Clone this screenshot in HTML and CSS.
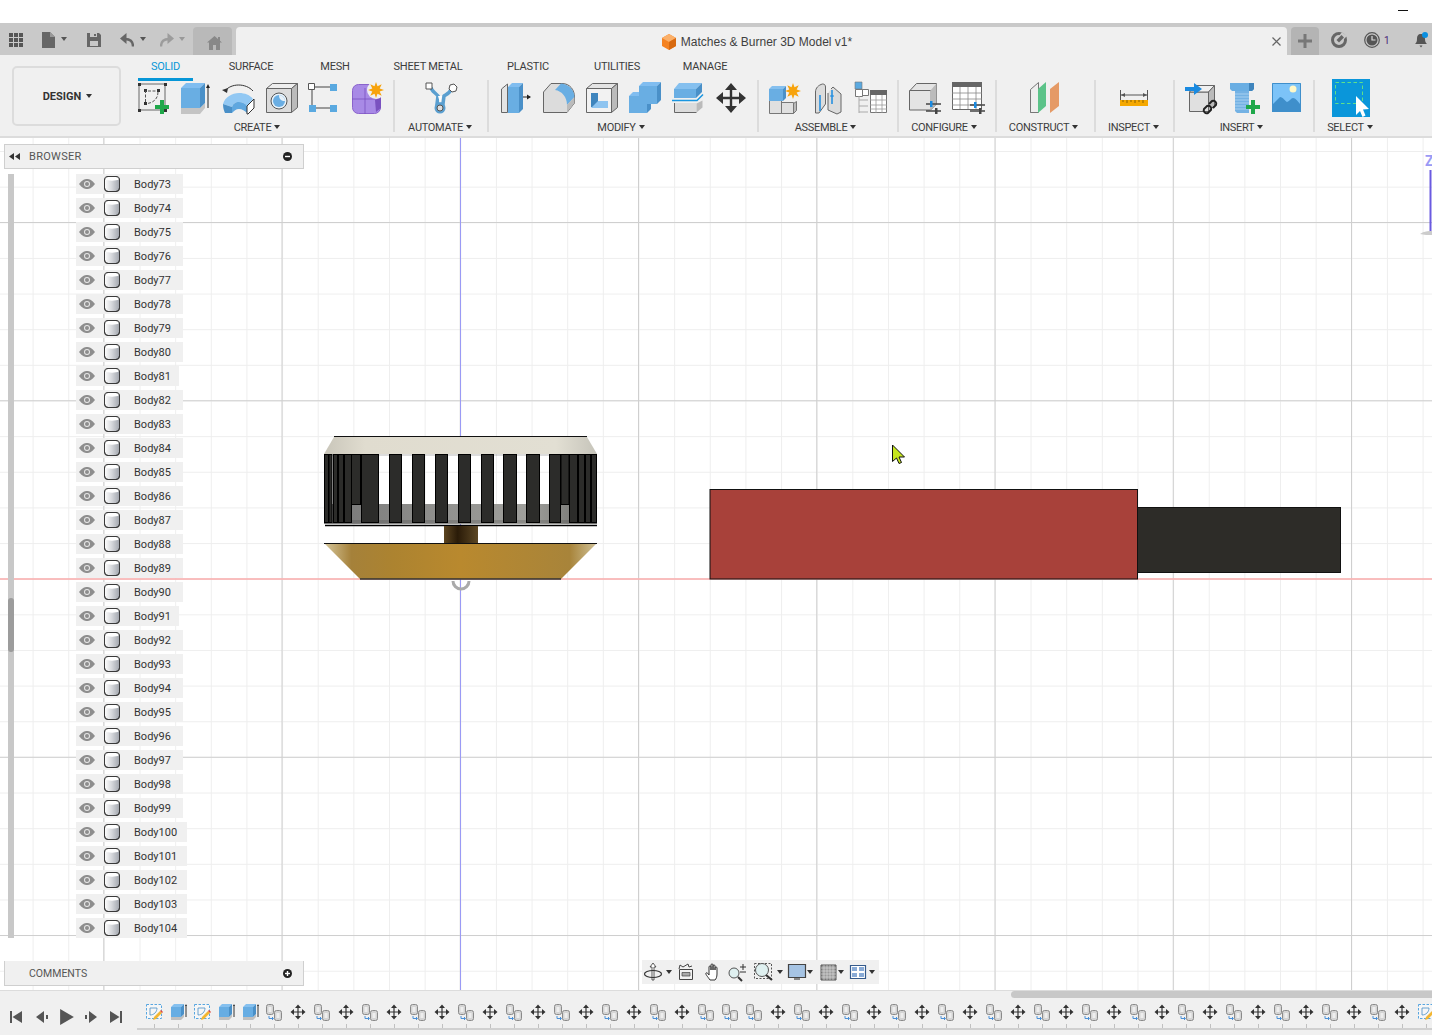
FILE: index.html
```html
<!DOCTYPE html>
<html lang="en">
<head>
<meta charset="utf-8">
<title>Matches &amp; Burner 3D Model v1</title>
<link rel="stylesheet" href="styles.css">
</head>
<body>
<svg class="defs" aria-hidden="true">
  <defs>
    <path id="star" d="M8 0 3.700 1.500 5.700 5.700 1.500 3.700 0 8-1.500 3.700-5.700 5.700-3.700 1.500-8 0-3.700-1.500-5.700-5.700-1.500-3.700 0-8 1.500-3.700 5.700-5.700 3.700-1.500Z" fill="#f7a30c"/>
    <linearGradient id="cyl" x1="0" x2="1" y1="0" y2="0"><stop offset="0" stop-color="#fff"/><stop offset=".5" stop-color="#d4d6da"/><stop offset="1" stop-color="#a0a4ac"/></linearGradient>
    <linearGradient id="topcone" x1="0" x2="1" y1="0" y2="0"><stop offset="0" stop-color="#c9c6ba"/><stop offset=".15" stop-color="#e0dccf"/><stop offset=".85" stop-color="#e2dfd3"/><stop offset="1" stop-color="#c6c4ba"/></linearGradient>
    <linearGradient id="band" x1="0" x2="1" y1="0" y2="0"><stop offset="0" stop-color="#777"/><stop offset=".35" stop-color="#8c8c8a"/><stop offset=".75" stop-color="#a0a09c"/><stop offset="1" stop-color="#6a6a68"/></linearGradient>
    <linearGradient id="stem" x1="0" x2="1" y1="0" y2="0"><stop offset="0" stop-color="#5c4520"/><stop offset=".4" stop-color="#2a1b08"/><stop offset="1" stop-color="#5c4724"/></linearGradient>
    <linearGradient id="gold" x1="0" x2="1" y1="0" y2="0"><stop offset="0" stop-color="#d6c79c"/><stop offset=".1" stop-color="#a5813a"/><stop offset=".25" stop-color="#ac8330"/><stop offset=".5" stop-color="#b9892e"/><stop offset=".9" stop-color="#a8843a"/><stop offset="1" stop-color="#d0c299"/></linearGradient>
    <symbol id="move" viewBox="0 0 36 36"><path d="M18 3 24 10H19.200V16.800H26V12L33 18 26 24V19.200H19.200V26H24L18 33 12 26H16.800V19.200H10V24L3 18 10 12V16.800H16.800V10H12Z" fill="#333"/></symbol>
    <symbol id="tl-sketch" viewBox="0 0 18 18"><path d="M1.500 1.500h15v14h-15z" fill="#f6f6f6" stroke="#58a6e0" stroke-dasharray="2.500 1.500"/><path d="M5 12V5h7M12 5c0 4-3 7-7 7" fill="none" stroke="#4a90c8" stroke-width=".8"/><path d="M9 14l6-6 2 2-6 6-3 1z" fill="#f2b632"/><path d="M15 8l2 2 1-1-2-2z" fill="#e0483c"/></symbol>
    <symbol id="tl-extrude" viewBox="0 0 18 18"><path d="M2 14h10l3-3v3l-3 3H2z" fill="#bfbfbf"/><path d="M2 4h10v10H2z" fill="#67ade3"/><path d="M2 4l3-3h10l-3 3z" fill="#85c0ef"/><path d="M12 4l3-3v10l-3 3z" fill="#4a90c8"/><path d="M17 14V2" stroke="#333"/><path d="M16 3l1-2 1 2z" fill="#333"/></symbol>
    <symbol id="tl-combine" viewBox="0 0 18 18"><rect x="1.500" y="1.500" width="7" height="10" rx="2" fill="#d4d4d4" stroke="#8a8a8a"/><rect x="3.500" y="4" width="3" height="5" fill="#eee"/><rect x="9.500" y="7.500" width="7" height="10" rx="2" fill="#d4d4d4" stroke="#8a8a8a"/><rect x="11.500" y="10" width="3" height="5" fill="#eee"/><path d="M4 13v2.500h4M7 14l1.500 1.500L7 17" fill="none" stroke="#4a90d8"/></symbol>
    <symbol id="eye" viewBox="0 0 16 10"><path d="M0 5C3 1 5.500 0 8 0s5 1 8 5c-3 4-5.500 5-8 5S3 9 0 5Z" fill="#8e8e8e"/><circle cx="8" cy="5" r="3" fill="#e8e8e8"/><circle cx="8" cy="5" r="2" fill="#8e8e8e"/></symbol>
    <symbol id="body" viewBox="0 0 16 16"><rect x=".5" y=".5" width="15" height="15" rx="3.500" fill="url(#cyl)" stroke="#3a3a3a"/><path d="M1 3.500c3 1.500 11 1.500 14 0V1H1z" fill="#fff"/><rect x=".5" y=".5" width="15" height="15" rx="3.500" fill="none" stroke="#3a3a3a"/></symbol>
  </defs>
</svg>
<div class="app">
  <header class="topstrip"><span class="minimize"></span></header>
  <nav class="titlebar">
    <svg class="tb-icon" width="14" height="14" viewBox="0 0 14 14"><path d="M0 0h4v4H0zM5 0h4v4H5zM10 0h4v4h-4zM0 5h4v4H0zM5 5h4v4H5zM10 5h4v4h-4zM0 10h4v4H0zM5 10h4v4H5zM10 10h4v4h-4z" fill="#555"/></svg>
    <svg class="tb-icon" width="13" height="16" viewBox="0 0 13 16"><path d="M0 0h8l5 5v11H0z" fill="#666"/><path d="M8 0v5h5z" fill="#999"/></svg>
    <span class="caret tb-caret"></span>
    <svg class="tb-icon" width="14" height="14" viewBox="0 0 14 14"><path d="M0 0h12l2 2v12H0z" fill="#666"/><path d="M3 0h7v4H3zM3 8h8v5H3z" fill="#c8c8c8"/><path d="M7 1h2v2H7z" fill="#666"/></svg>
    <svg class="tb-icon" width="14" height="14" viewBox="0 0 14 14"><path d="M13 13.500C13 8 10 6 5 6" fill="none" stroke="#666" stroke-width="2.400"/><path d="M6.500 0v11L0 5.500z" fill="#666"/></svg>
    <span class="caret tb-caret"></span>
    <svg class="tb-icon" width="14" height="14" viewBox="0 0 14 14"><path d="M1 13.500C1 8 4 6 9 6" fill="none" stroke="#9c9c9c" stroke-width="2.400"/><path d="M7.500 0v11L14 5.500z" fill="#9c9c9c"/></svg>
    <span class="caret tb-caret tb-caret-dim"></span>
    <div class="home-tab"><svg width="15" height="14" viewBox="0 0 15 14"><path d="M7.500 0 11 3V1h2v3.700L15 6.500h-2V14H9V9H6v5H2V6.500H0z" fill="#888"/></svg></div>
    <div class="doc-tab">
      <svg width="16" height="16" viewBox="0 0 16 16"><path d="M8 0l7 4v8l-7 4-7-4V4z" fill="#f58220"/><path d="M8 8l7-4L8 0 1 4z" fill="#fbb06a"/><path d="M8 8v8l7-4V4z" fill="#d86a10"/></svg>
      <span class="doc-title">Matches &amp; Burner 3D Model v1*</span>
      <svg class="doc-close" width="9" height="9" viewBox="0 0 9 9"><path d="M.5.500l8 8M8.500.500l-8 8" stroke="#666" stroke-width="1.200"/></svg>
    </div>
    <div class="plus-tab"><svg width="14" height="14" viewBox="0 0 14 14"><path d="M5.500 0h3v5.500H14v3H8.500V14h-3V8.500H0v-3h5.500z" fill="#777"/></svg></div>
    <svg class="tb-icon" width="16" height="16" viewBox="0 0 16 16"><circle cx="8" cy="8" r="6.500" fill="none" stroke="#666" stroke-width="3"/><path d="M11 0l5 4-4 4-4-4z" fill="#c9c9c9"/><path d="M5.500 8l5-5 2.500 2.500-5 5z" fill="#666"/></svg>
    <div class="tb-clock"><svg width="16" height="16" viewBox="0 0 16 16"><circle cx="8" cy="8" r="7.300" fill="none" stroke="#555" stroke-width="1.200"/><circle cx="8" cy="8" r="5.500" fill="#555"/><path d="M8 4v4h3.500" fill="none" stroke="#ddd" stroke-width="1.200"/></svg><span>1</span></div>
    <svg class="tb-icon" width="16" height="16" viewBox="0 0 16 16"><path d="M7 2c3 0 4 2 4 5s1 4 2 5H1c1-1 2-2 2-5s1-5 4-5zM5.500 13.500h3L7 15.500z" fill="#555"/><circle cx="11" cy="3" r="3" fill="#0a8fe0"/></svg>
  </nav>
  <section class="toolbar">
    <div class="design-col"><button class="design-btn"><span class="caret-label">DESIGN</span></button></div>
    <div class="tool-col">
      <div class="tabs">
        <span class="tab tab-active">SOLID</span><span class="tab">SURFACE</span><span class="tab">MESH</span><span class="tab">SHEET METAL</span><span class="tab">PLASTIC</span><span class="tab">UTILITIES</span><span class="tab">MANAGE</span>
      </div>
      <div class="ribbon">
        <div class="group g-create">
          <div class="icons">
            <svg class="ic" viewBox="0 0 36 36"><path d="M4 4h26v26H4z" fill="none" stroke="#444" stroke-width=".8"/><path d="M3 3h3v3H3zM29 3h3v3h-3zM3 29h3v3H3zM29 29h3v3h-3zM9 9h3v3H9zM22 9h3v3h-3zM9 22h3v3H9z" fill="#333"/><path d="M10.500 22V11h11M23 12c0 7-5 11-11 11.500" fill="none" stroke="#555" stroke-dasharray="3 1.500"/><path d="M25 20h4v5h5v4h-5v5h-4v-5h-5v-4h5z" fill="#1fa84a"/></svg>
            <svg class="ic" viewBox="0 0 36 36"><path d="M4 28h19l5-5v5l-5 6H4z" fill="#c4c4c4"/><path d="M4 8h19v20H4z" fill="#69aee3"/><path d="M4 8l5-5h19l-5 5z" fill="#80bdf0"/><path d="M23 8l5-5v20l-5 5z" fill="#4a90c8"/><path d="M31 28V7" stroke="#222"/><path d="M29 8l2-4 2 4z" fill="#222"/></svg>
            <svg class="ic" viewBox="0 0 36 36"><path d="M4 11C10 3 25 3 32 11" fill="none" stroke="#333"/><path d="M1 10l6-2-1 5z" fill="#333"/><path d="M2 24C4 17 11 13 18 13 24 13 29 15 32 19L26 26C24 23 21 22 18 22 14 22 12 24 11 27Z" fill="#92c8f3"/><path d="M2 24C2 28 3 31 4 33L11 33V27Z" fill="#4a90c8"/><path d="M11 27C12 24 14 22 18 22 21 22 24 23 26 26V33C24 31 21 29 18 29 15 29 13 31 11 33Z" fill="#5fa7df"/><path d="M26 26 33 19V28L27 34H26Z" fill="#fff" stroke="#333"/></svg>
            <svg class="ic" viewBox="0 0 36 36"><path d="M2.500 8.500h25v24h-25z" fill="#dcdcdc" stroke="#666"/><path d="M2.500 8.500l6-5h25l-6 5z" fill="#eee" stroke="#666"/><path d="M27.500 8.500l6-5v24l-6 5z" fill="#bbb" stroke="#666"/><circle cx="15" cy="21" r="8" fill="#e8f2fa" stroke="#555"/><circle cx="15" cy="21" r="6" fill="#6aaee3"/><path d="M15 15c3 0 6 3 6 6-4 0-6-2-6-6z" fill="#e8f2fa"/></svg>
            <svg class="ic" viewBox="0 0 36 36"><path d="M10 7h15M7 10v15M10 28h15" stroke="#444"/><path d="M3.500 3.500h6v6h-6z" fill="#fff" stroke="#555"/><path d="M25 4h7v7h-7zM4 25h7v7H4zM25 25h7v7h-7z" fill="#5aa9e0"/></svg>
            <svg class="ic" viewBox="0 0 36 36"><rect x="3.500" y="4.500" width="28" height="29" rx="6" fill="#a88ae6" stroke="#8a63cc"/><path d="M3 19h24M16 8v26" stroke="#7a52c0" stroke-width=".8"/><path d="M26 20l6-3v11l-5 4z" fill="#7a52c0"/><circle cx="27" cy="10" r="9" fill="#f0f0f0"/><use href="#star" x="27" y="10"/></svg>
          </div>
          <span class="label caret-label">CREATE</span>
        </div>
        <div class="group g-automate">
          <div class="icons">
            <svg class="ic" viewBox="0 0 36 36"><path d="M8 7c0 4 5 6 7 9l-1 8h6l1-8c3-2 6-3 8-8" fill="none" stroke="#5a9fd0" stroke-width="3.500"/><path d="M15 16l2 7 2-7z" fill="#fff"/><path d="M3 3h6v6H3z" fill="#fff" stroke="#555"/><path d="M27 5l4-1 3 3-1 4-4 1-3-3z" fill="#fff" stroke="#555"/><circle cx="17" cy="28" r="5.500" fill="#5a9fd0"/><circle cx="17" cy="28" r="3" fill="#ddd" stroke="#555"/></svg>
          </div>
          <span class="label caret-label">AUTOMATE</span>
        </div>
        <div class="group g-modify">
          <div class="icons">
            <svg class="ic" viewBox="0 0 36 36"><path d="M4.500 32.500V9l6-5v28.500z" fill="#e4e4e4" stroke="#666"/><path d="M11 7h11v26H11z" fill="#69aee3"/><path d="M11 7l4-4h11l-4 4z" fill="#80bdf0"/><path d="M22 7l4-4v26l-4 4z" fill="#4a90c8"/><path d="M26 17h7" stroke="#222"/><path d="M30 14.500l4 2.500-4 2.500z" fill="#222"/></svg>
            <svg class="ic" viewBox="0 0 36 36"><path d="M3.500 32.500V12L11 3.500h11C30 3.500 34.500 10 34.500 17v6L27 32.500Z" fill="#dcdcdc" stroke="#666"/><path d="M15 10l6-6.500c8 .5 13.500 7 13.500 13.500L27 25c0-8-5-14-12-15z" fill="#69aee3"/><path d="M27 25l7.500-8v6L27 32.500z" fill="#bbb"/></svg>
            <svg class="ic" viewBox="0 0 36 36"><path d="M2.500 8.500h25v24h-25z" fill="#f2f2f2" stroke="#666"/><path d="M2.500 8.500l6-5h25l-6 5z" fill="#e4e4e4" stroke="#666"/><path d="M27.500 8.500l6-5v24l-6 5z" fill="#bbb" stroke="#666"/><path d="M7 13h7v14H7z" fill="#3f85bd"/><path d="M7 28l7-7h10v7z" fill="#8ec4f0"/></svg>
            <svg class="ic" viewBox="0 0 36 36"><path d="M2 16H12V6H30V24H20V33H2Z" fill="#69aee3"/><path d="M12 6l4-4h18l-4 4zM2 16l4-4h6v4z" fill="#80bdf0"/><path d="M30 6l4-4v18l-4 4zM20 24h4v5l-4 4z" fill="#4a90c8"/></svg>
            <svg class="ic" viewBox="0 0 36 36"><path d="M4 9h22v9H4z" fill="#69aee3"/><path d="M4 9l5-6h23l-6 6z" fill="#85c0ef"/><path d="M26 9l6-6v9l-6 6z" fill="#4a90c8"/><path d="M2 20.500h25l6-6" fill="none" stroke="#1a96e0" stroke-width="1.500"/><path d="M4.500 23v9.500h22V23z" fill="#dcdcdc"/><path d="M4.500 23v9.500h22" fill="none" stroke="#666"/><path d="M26.500 32.500l6-5v-7l-6 3z" fill="#bbb"/></svg>
            <svg class="ic" viewBox="0 0 36 36"><use href="#move" width="36" height="36"/></svg>
          </div>
          <span class="label caret-label">MODIFY</span>
        </div>
        <div class="group g-assemble">
          <div class="icons">
            <svg class="ic" viewBox="0 0 36 36"><path d="M3.500 20.500h12v13h-12zM15.500 22.500h12v11h-12z" fill="#e0e0e0" stroke="#777"/><path d="M27.500 33.500l3-3v-9l-3 2z" fill="#bbb" stroke="#777"/><path d="M3 9h14v12H3z" fill="#69aee3"/><path d="M3 9l3-3h14l-3 3z" fill="#85c0ef"/><path d="M17 9l3-3v12l-3 3z" fill="#4a90c8"/><use href="#star" x="27" y="11"/></svg>
            <svg class="ic" viewBox="0 0 36 36"><path d="M5.500 33V12c0-4 3-7 7-8 2 0 3 1 3 3v17L9 33z" fill="#dcdcdc" stroke="#666"/><path d="M18 13v17l9 4 4-2V14l-8-7-2 2" fill="#dcdcdc" stroke="#666"/><path d="M10 15v16M22 10v14" stroke="#1a8ae0" stroke-width="1.500"/><path d="M20 16h4" stroke="#1a8ae0"/></svg>
            <svg class="ic" viewBox="0 0 36 36"><path d="M2 2h7v7H2z" fill="#5aa9e0" stroke="#777" stroke-width=".6"/><path d="M9.500 9.500h6v6h-6zM2.500 9.500h7v7h-7z" fill="#fff" stroke="#777"/><path d="M6 16v17M6 20h9M6 26h9M6 32h9" stroke="#aaa"/><path d="M17.500 14.500h16v18h-16z" fill="#fff" stroke="#777"/><path d="M17 10h17v5H17z" fill="#666"/><path d="M17 20h17M17 25h17M17 29h17M23 15v18M29 15v18" stroke="#999" stroke-width=".8"/></svg>
          </div>
          <span class="label caret-label">ASSEMBLE</span>
        </div>
        <div class="group g-configure">
          <div class="icons">
            <svg class="ic" viewBox="0 0 36 36"><path d="M2.500 30V11l7-7.500h20V24l-6 6z" fill="#e4e4e4" stroke="#666"/><path d="M23 11l6.500-7.500V24L23 30z" fill="#bbb"/><path d="M23.500 10.500H2.500" stroke="#666" fill="none"/><path d="M19 24h15M19 31h15" stroke="#444" stroke-width="1.500"/><path d="M23 21h2.500v6H23z" fill="#1a8ae0"/><path d="M28 28h2.500v6H28z" fill="#444"/></svg>
            <svg class="ic" viewBox="0 0 36 36"><path d="M2.500 2.500h29v27h-29z" fill="#fff" stroke="#666"/><path d="M2 2h30v5H2z" fill="#666"/><path d="M2 13h30M2 19h30M2 25h30M10 7v22M18 7v22M26 7v22" stroke="#888" stroke-width=".8"/><path d="M20 25h15M20 31h15" stroke="#444" stroke-width="1.500"/><path d="M24 22h2.500v6H24z" fill="#1a8ae0"/><path d="M29 28h2.500v6H29z" fill="#444"/></svg>
          </div>
          <span class="label caret-label">CONFIGURE</span>
        </div>
        <div class="group g-construct">
          <div class="icons">
            <svg class="ic" viewBox="0 0 36 36"><path d="M3.500 32.500V9.500l8-7v30z" fill="#eee" stroke="#777"/><path d="M3.500 32.500H11" stroke="#777"/><path d="M11 9l8-7v24l-8 7z" fill="#5cc389"/><path d="M23 9l9-7v24l-9 7z" fill="#e59a66"/></svg>
          </div>
          <span class="label caret-label">CONSTRUCT</span>
        </div>
        <div class="group g-inspect">
          <div class="icons">
            <svg class="ic" viewBox="0 0 36 36"><path d="M4.500 10v11M31.500 10v11M5 15h26" stroke="#555"/><path d="M5 15l4-2v4zM31 15l-4-2v4z" fill="#555"/><path d="M4 20h28v6H4z" fill="#f5a800"/><path d="M7 20v2M11 20v3M15 20v2M19 20v3M23 20v2M27 20v3" stroke="#8a6000"/></svg>
          </div>
          <span class="label caret-label">INSPECT</span>
        </div>
        <div class="group g-insert">
          <div class="icons">
            <svg class="ic" viewBox="0 0 36 36"><path d="M5.500 31.500V12h19v19.500z" fill="#e0e0e0" stroke="#666"/><path d="M5.500 12l6-6.500h19L24.500 12z" fill="#f0f0f0" stroke="#666"/><path d="M24.500 12l6-6.500v20l-6 6z" fill="#bbb" stroke="#666"/><path d="M1 7h9V3l8 6-8 6v-4H1z" fill="#1a8ae0"/><path d="M20 29l3-3a3 3 0 014 4l-3 3a3 3 0 01-4-4zM25 24l3-3a3 3 0 014 4l-3 3" fill="none" stroke="#222" stroke-width="2"/></svg>
            <svg class="ic" viewBox="0 0 36 36"><path d="M3 3h24v6l-2 2H5L3 9z" fill="#6aaee3"/><path d="M22 3h5v6l-2 2h-3z" fill="#3f85bd"/><path d="M8 11h14v22H10l-2-2z" fill="#74b2e4"/><path d="M8 14h14M8 17h14M8 20h14M8 23h14M8 26h14M8 29h14" stroke="#a8d0f0"/><path d="M24 20h4v5h5v4h-5v5h-4v-5h-5v-4h5z" fill="#1fa84a"/></svg>
            <svg class="ic" viewBox="0 0 36 36"><path d="M3 3h29v29H3z" fill="#7cc3f8"/><path d="M3 25l8-8c3 0 5 4 7 5 3-1 4-4 6-4 3 0 6 5 8 7v7H3z" fill="#3f8fcb"/><circle cx="24" cy="9" r="3.500" fill="#fff8c8"/><path d="M3.500 3.500h28v28h-28z" fill="none" stroke="#3f8fcb"/></svg>
          </div>
          <span class="label caret-label">INSERT</span>
        </div>
        <div class="group g-select">
          <svg class="ic-select" viewBox="0 0 38 38"><path d="M0 0h38v38H0z" fill="#0a96da"/><path d="M3.500 3.500h27v21h-27z" fill="none" stroke="#5fe08a" stroke-dasharray="3.500 2.500"/><path d="M24 17l13 13-6 .5 2.500 6-3 1.500-2.500-6-4 4z" fill="#fff"/></svg>
          <span class="label caret-label">SELECT</span>
        </div>
      </div>
    </div>
  </section>
  <main class="viewport">
    <svg class="scene" width="1432" height="852" viewBox="0 138 1432 852">
      <path d="M0 579H1432" stroke="#ffb0b0" stroke-width="1.500"/>
      <path d="M460.500 138V990" stroke="#9a9af5"/>
      <path d="M453 581a8 8 0 0016 0" fill="none" stroke="#aaa" stroke-width="3"/>
      <path d="M334 437H587L597 454H324Z" fill="url(#topcone)"/>
      <path d="M334 436.500H587" stroke="#111"/>
      <path d="M324 504H597V524H324Z" fill="url(#band)"/>
      <path d="M324 454H597V456H324ZM324 520H597V523H324Z" fill="#111" opacity=".15"/>
      <g class="bars">
        <rect x="324.500" y="454.500" width="4" height="68"/><rect x="329" y="454.500" width="3" height="68"/><rect x="333.500" y="454.500" width="4" height="68"/><rect x="338.500" y="454.500" width="5" height="68"/><rect x="344.500" y="454.500" width="7" height="68"/><rect x="351.500" y="454.500" width="9" height="50"/>
        <rect x="361.500" y="454.500" width="17" height="68"/><rect x="389.500" y="454.500" width="12" height="68"/><rect x="412.500" y="454.500" width="12" height="68"/><rect x="435.500" y="454.500" width="12" height="68"/><rect x="458.500" y="454.500" width="12" height="68"/><rect x="481.500" y="454.500" width="12" height="68"/><rect x="503.500" y="454.500" width="13" height="68"/><rect x="526.500" y="454.500" width="13" height="68"/><rect x="549.500" y="454.500" width="11" height="68"/>
        <rect x="561" y="454.500" width="8" height="50"/><rect x="569.500" y="454.500" width="8" height="68"/><rect x="578.500" y="454.500" width="6" height="68"/><rect x="585.500" y="454.500" width="5" height="68"/><rect x="591.500" y="454.500" width="5" height="68"/>
      </g>
      <path d="M325 525.500H597" stroke="#000" stroke-width="1.500"/>
      <path d="M444 526H478V543H444Z" fill="url(#stem)"/>
      <path d="M324 543H597L561 579H360Z" fill="url(#gold)"/>
      <path d="M324 543.500H597" stroke="#111" stroke-width="1"/>
      <path d="M360 579H561" stroke="#333" stroke-width="1.500"/>
      <rect x="710" y="489.500" width="427.500" height="89.500" fill="#a8413a" stroke="#111"/>
      <rect x="1137.500" y="507.500" width="203" height="65" fill="#2d2c28" stroke="#111"/>
      <path d="M892.500 445V461.500L896.500 458 899 463.500 901.500 462.500 899 457H904.500Z" fill="#c6e61e" stroke="#111"/>
      <path d="M1430.500 170V232" stroke="#6a5ae0" stroke-width="2"/>
      <path d="M1420 234c4-3 8-3 12-3v4c-4 0-8 0-12-1z" fill="#ccc"/>
      <text x="1425" y="166" class="axis-z">Z</text>
    </svg>
    <aside class="browser">
      <div class="panel-head">
        <svg class="collapse" width="11" height="7" viewBox="0 0 11 7"><path d="M5 0v7L0 3.500zM11 0v7L6 3.500z" fill="#333"/></svg>
        <span class="panel-title panel-title-wide">BROWSER</span>
        <span class="panel-btn"><svg width="9" height="9" viewBox="0 0 9 9"><circle cx="4.500" cy="4.500" r="4.500" fill="#222"/><path d="M2 3.800h5v1.400H2z" fill="#fff"/></svg></span>
      </div>
      <div class="tree">
        <div class="scrollbar"><div class="scroll-thumb"></div></div>
        <ul class="rows">
          <li class="row"><svg class="eye"><use href="#eye"/></svg><svg class="cyl"><use href="#body"/></svg><span>Body73</span></li>
          <li class="row"><svg class="eye"><use href="#eye"/></svg><svg class="cyl"><use href="#body"/></svg><span>Body74</span></li>
          <li class="row"><svg class="eye"><use href="#eye"/></svg><svg class="cyl"><use href="#body"/></svg><span>Body75</span></li>
          <li class="row"><svg class="eye"><use href="#eye"/></svg><svg class="cyl"><use href="#body"/></svg><span>Body76</span></li>
          <li class="row"><svg class="eye"><use href="#eye"/></svg><svg class="cyl"><use href="#body"/></svg><span>Body77</span></li>
          <li class="row"><svg class="eye"><use href="#eye"/></svg><svg class="cyl"><use href="#body"/></svg><span>Body78</span></li>
          <li class="row"><svg class="eye"><use href="#eye"/></svg><svg class="cyl"><use href="#body"/></svg><span>Body79</span></li>
          <li class="row"><svg class="eye"><use href="#eye"/></svg><svg class="cyl"><use href="#body"/></svg><span>Body80</span></li>
          <li class="row row-narrow"><svg class="eye"><use href="#eye"/></svg><svg class="cyl"><use href="#body"/></svg><span>Body81</span></li>
          <li class="row"><svg class="eye"><use href="#eye"/></svg><svg class="cyl"><use href="#body"/></svg><span>Body82</span></li>
          <li class="row"><svg class="eye"><use href="#eye"/></svg><svg class="cyl"><use href="#body"/></svg><span>Body83</span></li>
          <li class="row"><svg class="eye"><use href="#eye"/></svg><svg class="cyl"><use href="#body"/></svg><span>Body84</span></li>
          <li class="row"><svg class="eye"><use href="#eye"/></svg><svg class="cyl"><use href="#body"/></svg><span>Body85</span></li>
          <li class="row"><svg class="eye"><use href="#eye"/></svg><svg class="cyl"><use href="#body"/></svg><span>Body86</span></li>
          <li class="row"><svg class="eye"><use href="#eye"/></svg><svg class="cyl"><use href="#body"/></svg><span>Body87</span></li>
          <li class="row"><svg class="eye"><use href="#eye"/></svg><svg class="cyl"><use href="#body"/></svg><span>Body88</span></li>
          <li class="row"><svg class="eye"><use href="#eye"/></svg><svg class="cyl"><use href="#body"/></svg><span>Body89</span></li>
          <li class="row"><svg class="eye"><use href="#eye"/></svg><svg class="cyl"><use href="#body"/></svg><span>Body90</span></li>
          <li class="row row-narrow"><svg class="eye"><use href="#eye"/></svg><svg class="cyl"><use href="#body"/></svg><span>Body91</span></li>
          <li class="row"><svg class="eye"><use href="#eye"/></svg><svg class="cyl"><use href="#body"/></svg><span>Body92</span></li>
          <li class="row"><svg class="eye"><use href="#eye"/></svg><svg class="cyl"><use href="#body"/></svg><span>Body93</span></li>
          <li class="row"><svg class="eye"><use href="#eye"/></svg><svg class="cyl"><use href="#body"/></svg><span>Body94</span></li>
          <li class="row"><svg class="eye"><use href="#eye"/></svg><svg class="cyl"><use href="#body"/></svg><span>Body95</span></li>
          <li class="row"><svg class="eye"><use href="#eye"/></svg><svg class="cyl"><use href="#body"/></svg><span>Body96</span></li>
          <li class="row"><svg class="eye"><use href="#eye"/></svg><svg class="cyl"><use href="#body"/></svg><span>Body97</span></li>
          <li class="row"><svg class="eye"><use href="#eye"/></svg><svg class="cyl"><use href="#body"/></svg><span>Body98</span></li>
          <li class="row"><svg class="eye"><use href="#eye"/></svg><svg class="cyl"><use href="#body"/></svg><span>Body99</span></li>
          <li class="row row-wide"><svg class="eye"><use href="#eye"/></svg><svg class="cyl"><use href="#body"/></svg><span>Body100</span></li>
          <li class="row row-wide"><svg class="eye"><use href="#eye"/></svg><svg class="cyl"><use href="#body"/></svg><span>Body101</span></li>
          <li class="row row-wide"><svg class="eye"><use href="#eye"/></svg><svg class="cyl"><use href="#body"/></svg><span>Body102</span></li>
          <li class="row row-wide"><svg class="eye"><use href="#eye"/></svg><svg class="cyl"><use href="#body"/></svg><span>Body103</span></li>
          <li class="row row-wide"><svg class="eye"><use href="#eye"/></svg><svg class="cyl"><use href="#body"/></svg><span>Body104</span></li>
        </ul>
      </div>
    </aside>
    <aside class="comments">
      <span class="panel-title">COMMENTS</span>
      <span class="panel-btn"><svg width="9" height="9" viewBox="0 0 9 9"><circle cx="4.500" cy="4.500" r="4.500" fill="#222"/><path d="M2 3.800h5v1.400H2z" fill="#fff"/><path d="M3.800 2h1.400v5H3.800z" fill="#fff"/></svg></span>
    </aside>
    <div class="navbar">
      <svg class="nv" viewBox="0 0 20 20"><path d="M10 1l3 4h-2v13H9V5H7z" fill="#fff" stroke="#333" stroke-width=".8"/><ellipse cx="10" cy="12" rx="8.500" ry="3.500" fill="none" stroke="#333" stroke-width="1.200"/></svg><span class="caret"></span>
      <svg class="nv" viewBox="0 0 20 20"><path d="M3.500 7.500h13v10h-13z" fill="#f2f2f2" stroke="#444"/><path d="M3 7l1-4 3 2 5-3 1 3 3-1" fill="none" stroke="#444"/><path d="M6 10.500h8v3.500H6z" fill="#aaa" stroke="#444" stroke-width=".7"/></svg>
      <svg class="nv nv-hand" viewBox="0 0 20 20"><path d="M6 18c-2-3-5-6-4-7 1-.8 2 .5 3 2V5c0-1.500 2-1.500 2 0v3-5c0-1.500 2-1.500 2 0v5-4c0-1.500 2-1.500 2 0v4-2c0-1.500 2-1.500 2 0v6c0 3-1 5-2 6z" fill="#fff" stroke="#333"/></svg>
      <svg class="nv" viewBox="0 0 20 20"><circle cx="7" cy="11" r="5" fill="#dff0f0" stroke="#555"/><path d="M11 15l4 4" stroke="#333" stroke-width="2"/><path d="M13 5h6M16 2v6M13 10h6" stroke="#333"/></svg>
      <svg class="nv" viewBox="0 0 20 20"><path d="M1.500 1.500h17v15h-17z" fill="none" stroke="#555" stroke-dasharray="2 1.500"/><circle cx="9" cy="8" r="6.500" fill="#dff0f0" stroke="#555"/><path d="M13 13l6 5" stroke="#333" stroke-width="2.200"/></svg><span class="caret"></span>
      <svg class="nv" viewBox="0 0 20 20"><path d="M1.500 2.500h17v13h-17z" fill="#a6c4e4" stroke="#444" stroke-width="1.200"/><path d="M7 16h6v2H7z" fill="#888"/></svg><span class="caret"></span>
      <svg class="nv" viewBox="0 0 20 20"><path d="M3 3h15v15H3z" fill="#999" stroke="#555"/><path d="M6 3v15M9 3v15M12 3v15M15 3v15M3 6h15M3 9h15M3 12h15M3 15h15" stroke="#e0e0e0" stroke-width=".6"/></svg><span class="caret"></span>
      <svg class="nv" viewBox="0 0 20 20"><path d="M2.500 3.500h15v13h-15z" fill="#fff" stroke="#345a8c" stroke-width="1.200"/><path d="M4 5h5v4H4zM11 5h5v4h-5zM4 11h5v4H4zM11 11h5v4h-5z" fill="#88aad6"/></svg><span class="caret"></span>
    </div>
  </main>
  <footer class="timeline">
    <div class="tl-scroll"><div class="tl-thumb"></div></div>
    <div class="tl-body">
      <div class="tl-controls">
        <svg class="ctl" viewBox="0 0 14 14"><path d="M1 1h2v12H1zM13 1v12L3.500 7z" fill="#555"/></svg>
        <svg class="ctl" viewBox="0 0 14 14"><path d="M9 1v12L1 7zM11 5h2v4h-2z" fill="#555"/></svg>
        <svg class="ctl ctl-play" viewBox="0 0 14 14"><path d="M1 0l12 7-12 7z" fill="#555"/></svg>
        <svg class="ctl" viewBox="0 0 14 14"><path d="M5 1v12l8-6zM1 5h2v4H1z" fill="#555"/></svg>
        <svg class="ctl" viewBox="0 0 14 14"><path d="M11 1h2v12h-2zM1 1v12l9.500-6z" fill="#555"/></svg>
      </div>
      <div class="tl-track">
        <span class="ti"><svg><use href="#tl-sketch"/></svg></span><span class="ti"><svg><use href="#tl-extrude"/></svg></span><span class="ti"><svg><use href="#tl-sketch"/></svg></span><span class="ti"><svg><use href="#tl-extrude"/></svg></span><span class="ti"><svg><use href="#tl-extrude"/></svg></span>
        <span class="ti"><svg><use href="#tl-combine"/></svg></span><span class="ti"><svg><use href="#move"/></svg></span><span class="ti"><svg><use href="#tl-combine"/></svg></span><span class="ti"><svg><use href="#move"/></svg></span><span class="ti"><svg><use href="#tl-combine"/></svg></span><span class="ti"><svg><use href="#move"/></svg></span><span class="ti"><svg><use href="#tl-combine"/></svg></span><span class="ti"><svg><use href="#move"/></svg></span><span class="ti"><svg><use href="#tl-combine"/></svg></span><span class="ti"><svg><use href="#move"/></svg></span><span class="ti"><svg><use href="#tl-combine"/></svg></span><span class="ti"><svg><use href="#move"/></svg></span><span class="ti"><svg><use href="#tl-combine"/></svg></span><span class="ti"><svg><use href="#move"/></svg></span><span class="ti"><svg><use href="#tl-combine"/></svg></span><span class="ti"><svg><use href="#move"/></svg></span><span class="ti"><svg><use href="#tl-combine"/></svg></span><span class="ti"><svg><use href="#move"/></svg></span>
        <span class="ti"><svg><use href="#tl-combine"/></svg></span><span class="ti"><svg><use href="#tl-combine"/></svg></span><span class="ti"><svg><use href="#tl-combine"/></svg></span>
        <span class="ti"><svg><use href="#move"/></svg></span><span class="ti"><svg><use href="#tl-combine"/></svg></span><span class="ti"><svg><use href="#move"/></svg></span><span class="ti"><svg><use href="#tl-combine"/></svg></span><span class="ti"><svg><use href="#move"/></svg></span><span class="ti"><svg><use href="#tl-combine"/></svg></span><span class="ti"><svg><use href="#move"/></svg></span><span class="ti"><svg><use href="#tl-combine"/></svg></span><span class="ti"><svg><use href="#move"/></svg></span><span class="ti"><svg><use href="#tl-combine"/></svg></span><span class="ti"><svg><use href="#move"/></svg></span><span class="ti"><svg><use href="#tl-combine"/></svg></span><span class="ti"><svg><use href="#move"/></svg></span><span class="ti"><svg><use href="#tl-combine"/></svg></span><span class="ti"><svg><use href="#move"/></svg></span><span class="ti"><svg><use href="#tl-combine"/></svg></span><span class="ti"><svg><use href="#move"/></svg></span><span class="ti"><svg><use href="#tl-combine"/></svg></span><span class="ti"><svg><use href="#move"/></svg></span><span class="ti"><svg><use href="#tl-combine"/></svg></span><span class="ti"><svg><use href="#move"/></svg></span><span class="ti"><svg><use href="#tl-combine"/></svg></span><span class="ti"><svg><use href="#move"/></svg></span><span class="ti"><svg><use href="#tl-combine"/></svg></span><span class="ti"><svg><use href="#move"/></svg></span><span class="ti"><svg><use href="#tl-combine"/></svg></span><span class="ti"><svg><use href="#move"/></svg></span>
        <span class="ti"><svg><use href="#tl-sketch"/></svg></span>
      </div>
    </div>
  </footer>
</div>
</body>
</html>
```
FILE: styles.css
```css
* { box-sizing: border-box; }
html, body { margin: 0; height: 100%; overflow: hidden; background: #fff; }
body { font-family: Roboto, "Liberation Sans", sans-serif; font-size: 11px; color: #3c3c3c; }
.defs { display: block; width: 0; height: 0; }
.app { display: flex; flex-direction: column; height: 1035px; width: 1432px; }

.topstrip { height: 23px; background: #fff; display: flex; justify-content: flex-end; padding: 10px 24px 0 0; }
.minimize { display: block; width: 10px; height: 1px; background: #111; }

.titlebar {
  height: 32px; background: #c9c9c9; padding-left: 9px;
  display: grid; align-items: center;
  grid-template-columns: 33px 19px 26px 33px 20px 20px 19px 14px 43px 1055px 40px 33px 50px 18px;
}
.tb-icon { display: block; margin-top: 2px; }
.caret { display: block; width: 0; height: 0; border-left: 3.5px solid transparent; border-right: 3.5px solid transparent; border-top: 4px solid #333; }
.tb-caret { border-top-color: #555; margin-top: 0; }
.tb-caret-dim { border-top-color: #999; }
.home-tab { width: 39px; height: 28px; margin-top: 4px; background: #b9b9b9; border-radius: 4px 4px 0 0; display: flex; align-items: center; justify-content: center; padding: 3px 0 0 3px; }
.doc-tab { position: relative; width: 1051px; height: 28px; margin-top: 4px; background: #f0f0f0; border-radius: 4px 4px 0 0; display: flex; align-items: center; justify-content: center; gap: 4px; padding-right: 10px; padding-top: 1px; }
.doc-title { font-family: "Liberation Sans", Arial, sans-serif; font-size: 12px; color: #3f3f3f; }
.doc-close { position: absolute; right: 6px; top: 10px; }
.plus-tab { width: 28px; height: 28px; margin-top: 4px; background: #b4b4b4; border-radius: 4px 4px 0 0; display: flex; align-items: center; justify-content: center; }
.tb-clock { display: flex; align-items: center; gap: 4px; margin-top: 2px; font-size: 10px; color: #4a2a78; }

.toolbar { height: 83px; background: #f0f0f0; border-bottom: 2px solid #dcdcdc; display: flex; }
.design-col { width: 131px; flex: none; padding: 11px 0 0 12px; }
.design-btn { display: flex; align-items: center; justify-content: center; width: 109px; height: 60px; background: #f0f0f0; border: 2px solid #dcdcdc; border-radius: 5px; font-family: Roboto, sans-serif; font-size: 11px; font-weight: 700; color: #333; padding: 1px 0 0 2px; }
.design-btn .caret-label { gap: 5px; }
.tool-col { flex: 1; min-width: 0; }
.tabs { display: grid; grid-template-columns: 55px 116px 52px 134px 66px 112px 64px; margin-left: 7px; height: 23px; }
.tab { text-align: center; line-height: 22px; padding-top: 1px; font-size: 11px; letter-spacing: -.2px; color: #3c3c3c; }
.tab-active { color: #0696d7; border-bottom: 3px solid #0696d7; }
.ribbon { display: flex; height: 58px; padding-top: 2px; }
.group { height: 52px; border-right: 2px solid #dcdcdc; display: flex; flex-direction: column; flex: none; }
.icons { display: grid; height: 36px; justify-content: start; }
.ic { display: block; width: 36px; height: 36px; overflow: visible; }
.label { display: flex; justify-content: center; line-height: 20px; height: 20px; margin-top: 2px; font-size: 11px; letter-spacing: -.3px; color: #3c3c3c; }
.caret-label { display: flex; align-items: center; gap: 3px; }
.caret-label::after { content: ""; display: block; width: 0; height: 0; border-left: 3.5px solid transparent; border-right: 3.5px solid transparent; border-top: 4px solid #333; margin-top: -2px; }
.g-create { width: 264px; padding-left: 4px; }
.g-create .icons { grid-template-columns: 42px 44px 43px 41px 44px 36px; }
.g-create .label { margin-right: 14px; }
.g-automate { width: 94px; padding-left: 28px; }
.g-automate .label { margin-left: -28px; margin-right: 2px; }
.g-modify { width: 270px; padding-left: 8px; }
.g-modify .icons { grid-template-columns: 43px 44px 43px 43px 43px 36px; }
.g-modify .label { margin-right: 12px; }
.g-assemble { width: 140px; padding-left: 7px; }
.g-assemble .icons { grid-template-columns: 44px 43px 36px; }
.g-assemble .label { margin-right: 12px; }
.g-configure { width: 98px; padding-left: 8px; }
.g-configure .icons { grid-template-columns: 43px 36px; }
.g-configure .label { margin-right: 14px; }
.g-construct { width: 99px; padding-left: 30px; }
.g-construct .label { margin-left: -30px; margin-right: 4px; }
.g-inspect { width: 79px; padding-left: 20px; }
.g-inspect .label { margin-left: -20px; margin-right: 2px; }
.g-insert { width: 140px; padding-left: 9px; }
.g-insert .icons { grid-template-columns: 43px 42px 36px; }
.g-insert .label { margin-right: 14px; }
.g-select { width: 76px; border-right: 0; padding-left: 17px; }
.g-select .label { margin-left: -17px; margin-right: 6px; margin-top: 2px; }
.ic-select { display: block; width: 38px; height: 38px; margin-top: -1px; margin-bottom: -1px; flex: none; }

.viewport {
  position: relative; flex: 1; min-height: 0; overflow: hidden; background-color: #fff;
  background-image:
    linear-gradient(90deg, #cfcfcf 1px, transparent 1px),
    linear-gradient(#cfcfcf 1px, transparent 1px),
    linear-gradient(90deg, #eeeeee 1px, transparent 1px),
    linear-gradient(#eeeeee 1px, transparent 1px);
  background-size: 178.25px 100%, 100% 178.25px, 35.65px 100%, 100% 35.65px;
  background-position: 103.25px 0, 0 84px, 32.6px 0, 0 13px;
}
.scene { position: absolute; left: 0; top: 0; display: block; }
.bars rect { fill: #2c2c2a; stroke: #000; stroke-width: 1; }
.axis-z { font-family: Roboto, sans-serif; font-size: 14px; fill: #9a9af5; font-weight: 700; }

.browser { position: absolute; left: 4px; top: 6px; width: 300px; }
.panel-head, .comments { display: flex; align-items: center; height: 25px; background: #f0f0f0; border: 1px solid #cfcfcf; position: relative; }
.collapse { position: absolute; left: 4px; top: 8px; }
.panel-title { margin-left: 24px; font-size: 10.5px; color: #555; }
.panel-title-wide { font-size: 11px; letter-spacing: .3px; }
.panel-btn { margin-left: auto; margin-right: 11px; display: flex; }
.tree { display: flex; padding-top: 5px; }
.scrollbar { width: 6px; height: 764px; margin-left: 4px; background: #c8c8c8; position: relative; flex: none; }
.scroll-thumb { position: absolute; left: 0; top: 424px; width: 6px; height: 54px; background: #9c9c9c; border-radius: 3px; }
.rows { list-style: none; margin: 0 0 0 62px; padding: 0; display: flex; flex-direction: column; gap: 4px; align-items: flex-start; }
.row { display: flex; align-items: center; width: 107px; height: 20px; background: #f0f0f0; padding-left: 3px; font-size: 11px; color: #333; }
.row-narrow { width: 103px; }
.row-wide { width: 111px; }
.row .eye { width: 16px; height: 10px; margin-right: 9px; flex: none; }
.row .cyl { width: 16px; height: 16px; margin-right: 14px; flex: none; }

.comments { position: absolute; left: 4px; top: 823px; width: 300px; border-top: 0; }
.navbar {
  position: absolute; left: 642px; top: 822px; width: 237px; height: 24px; background: #f0f0f0; padding-left: 1px;
  display: grid; align-items: center;
  grid-template-columns: 23px 10px 26px 25px 26px 24px 10px 20px 11px 20px 10px 21px 10px;
}
.nv { display: block; width: 20px; height: 20px; }
.nv-hand { margin-left: 2px; }

.timeline { height: 45px; background: #f0f0f0; border-top: 1px solid #dcdcdc; display: flex; flex-direction: column; }
.tl-scroll { height: 6px; display: flex; justify-content: flex-end; }
.tl-thumb { width: 421px; height: 7px; background: #c8c8c8; border-radius: 4px 0 0 4px; }
.tl-body { display: flex; flex: 1; min-height: 0; }
.tl-controls { width: 137px; flex: none; padding: 13px 0 0 9px; display: grid; grid-template-columns: 26px 25px 24px 25px 14px; align-items: start; }
.ctl { display: block; width: 14px; height: 14px; }
.ctl-play { width: 16px; height: 16px; margin-top: -1px; margin-left: -1px; }
.tl-track { flex: 1; min-width: 0; display: flex; overflow: hidden; padding-left: 5px; height: 33px; border-bottom: 2px solid #d0d0d0; align-items: flex-start; padding-top: 6px; }
.ti { flex: none; position: relative; display: flex; justify-content: center; width: 24px; height: 25px; }
.ti svg { display: block; width: 18px; height: 18px; }
.ti::after { content: ""; position: absolute; left: 11.5px; bottom: 0; width: 1px; height: 4px; background: #c0c0c0; }
```
